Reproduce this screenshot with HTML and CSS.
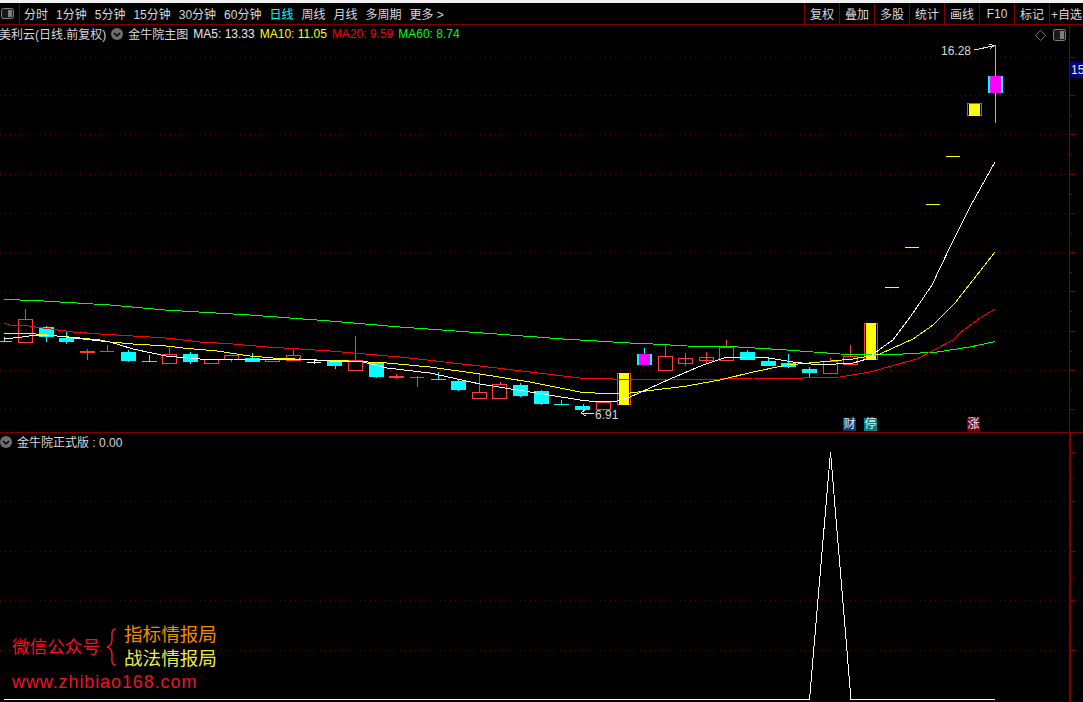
FILE: index.html
```html
<!DOCTYPE html>
<html lang="zh-CN">
<head>
<meta charset="utf-8">
<title>金牛院主图</title>
<link rel="stylesheet" href="styles.css">
</head>
<body>
<div class="app">
  <div class="topstrip"></div>
  <div class="toolbar">
    <div class="tool-toggle">
      <svg class="icon-panel" width="13" height="11" viewBox="0 0 13 11"><rect class="ip-frame" x="0.5" y="0.5" width="12" height="10" rx="2"/><rect class="ip-fill" x="7" y="2" width="4" height="7"/></svg>
    </div>
    <nav class="periods">
      <span>分时</span><span>1分钟</span><span>5分钟</span><span>15分钟</span><span>30分钟</span><span>60分钟</span><span class="active">日线</span><span>周线</span><span>月线</span><span>多周期</span><span>更多 &gt;</span>
    </nav>
    <nav class="tools">
      <span>复权</span><span>叠加</span><span>多股</span><span>统计</span><span>画线</span><span>F10</span><span>标记</span><span class="last">+自选</span>
    </nav>
  </div>

  <section class="pane pane-main">
    <svg class="chart" width="1083" height="407" viewBox="0 25 1083 407">
      <g class="grid">
        <path d="M0 57.5H1069M0 95.5H1069M0 134.5H1069M0 174.5H1069M0 213.5H1069M0 252.5H1069M0 291.5H1069M0 331.5H1069M0 370.5H1069M0 409.5H1069"/>
      </g>
      <g class="axis">
        <path class="axis-line" d="M1069.5 25V432"/>
        <path class="axis-tick" d="M1070 57.5h5M1070 95.5h5M1070 115.5h2M1070 134.5h5M1070 154.5h2M1070 174.5h5M1070 194.5h2M1070 213.5h5M1070 233.5h2M1070 252.5h5M1070 272.5h2M1070 291.5h5M1070 311.5h2M1070 331.5h5M1070 351.5h2M1070 370.5h5M1070 390.5h2M1070 409.5h5"/>
      </g>

      <!-- wicks -->
      <path class="wick-up" d="M25.5 309V319M87.5 349V360M107.5 345V352M169.5 348V354M211.5 363V364M231.5 359V362M272.5 361V362M293.5 350V355M355.5 336V360M396.5 374V379M417.5 376V387M479.5 373V392M500.5 382V384M603.5 409V411M665.5 345V356M685.5 353V366M706.5 352V364M726.5 340V347M830.5 358V361M850.5 345V356"/>
      <path class="wick-down" d="M4.5 337V341M46.5 326V342M66.5 332V344M128.5 350V362M149.5 355V361M190.5 352V364M252.5 353V362M335.5 360V369M376.5 362V378M438.5 372V380M458.5 380V391M520.5 383V397M541.5 390V405M561.5 400V405M583.5 404V410M644.5 348V354M747.5 350V352M768.5 358V361M788.5 354V368M809.5 367V378M995.5 45V123"/>
      <path class="wick-white" d="M314.5 359V364"/>

      <!-- hollow rising candles -->
      <g class="hollow">
        <rect x="18.5" y="319.5" width="14" height="23"/>
        <rect x="162.5" y="354.5" width="14" height="9"/>
        <rect x="204.5" y="359.5" width="14" height="4"/>
        <rect x="224.5" y="355.5" width="14" height="4"/>
        <rect x="265.5" y="359.5" width="14" height="2"/>
        <rect x="286.5" y="355.5" width="14" height="5"/>
        <rect x="348.5" y="360.5" width="14" height="10"/>
        <rect x="472.5" y="392.5" width="14" height="6"/>
        <rect x="492.5" y="384.5" width="14" height="14"/>
        <rect x="596.5" y="402.5" width="14" height="7"/>
        <rect x="658.5" y="356.5" width="14" height="14"/>
        <rect x="678.5" y="358.5" width="14" height="5"/>
        <rect x="699.5" y="357.5" width="14" height="3"/>
        <rect x="719.5" y="347.5" width="14" height="13"/>
        <rect x="823.5" y="361.5" width="14" height="12"/>
        <rect x="843.5" y="356.5" width="14" height="8"/>
      </g>

      <!-- falling candles -->
      <g class="falling">
        <rect x="39" y="327" width="15" height="10"/>
        <rect x="59" y="338" width="15" height="4"/>
        <rect x="121" y="352" width="15" height="9"/>
        <rect x="183" y="354" width="15" height="8"/>
        <rect x="245" y="358" width="15" height="4"/>
        <rect x="327" y="361" width="15" height="5"/>
        <rect x="369" y="363" width="15" height="14"/>
        <rect x="451" y="381" width="15" height="9"/>
        <rect x="513" y="385" width="15" height="11"/>
        <rect x="534" y="391" width="15" height="13"/>
        <rect x="575" y="406" width="15" height="4"/>
        <rect x="740" y="352" width="15" height="8"/>
        <rect x="761" y="361" width="15" height="5"/>
        <rect x="781" y="363" width="15" height="4"/>
        <rect x="802" y="369" width="15" height="4"/>
        <rect x="637" y="354" width="15" height="11"/>
        <rect x="988" y="76" width="15" height="17"/>
        <rect x="0" y="341" width="12" height="1"/>
        <rect x="142" y="361" width="15" height="1"/>
        <rect x="431" y="379" width="15" height="1"/>
        <rect x="554" y="404" width="15" height="1"/>
      </g>

      <!-- flat red bars -->
      <g class="solid-red">
        <rect x="80" y="351" width="15" height="2"/>
        <rect x="100" y="351" width="14" height="1"/>
        <rect x="389" y="376" width="15" height="2"/>
        <rect x="410" y="377" width="14" height="1"/>
      </g>
      <rect class="doji-white" x="307" y="362" width="14" height="1"/>

      <!-- signal overlays -->
      <g class="magenta">
        <rect x="639" y="354" width="11" height="11"/>
        <rect x="990" y="76" width="11" height="17"/>
      </g>
      <g class="signal">
        <rect x="617.5" y="373.5" width="13" height="31"/>
        <rect x="864.5" y="323.5" width="13" height="36"/>
        <rect x="967.5" y="103.5" width="14" height="12"/>
      </g>
      <g class="signal-fill">
        <rect x="619" y="373" width="10" height="32"/>
        <rect x="866" y="323" width="10" height="37"/>
        <rect x="969" y="104" width="11" height="12"/>
      </g>
      <g class="dash">
        <rect x="885" y="287" width="14" height="1"/>
        <rect x="905" y="247" width="14" height="1"/>
        <rect x="926" y="204" width="14" height="1"/>
        <rect x="946" y="156" width="14" height="1"/>
      </g>

      <!-- moving averages -->
      <polyline class="ma ma60" points="4,299.5 36,300.5 60,302 110,305 165,310 250,315 330,321 400,327 497,334 563,339 630,343 653,344 687,346 730,346.5 787,350 820,352.5 840,354 877,355 903,354 937,352 970,347 995,341.5"/>
      <polyline class="ma ma20" points="4,323 10,325 29,326 43,328 73,332 100,334 133,336 166,338 200,342 233,344 267,347 300,349 330,351 400,357 480,366 530,372 580,378 613,379 633,380 655,379 720,379 753,378 803,378 840,377 870,372 917,359 953,340 960,333 980,318 995,309"/>
      <polyline class="ma ma10" points="4,333.5 36,334 57,336 80,338 100,340 110,342 133,344 166,346 183,348 217,351 250,356 273,358 317,360 330,360 387,363 430,367 480,374 530,382 580,392 610,394 630,393 687,386 720,380 753,372 787,365 820,362 853,359 880,354 913,339 933,325 955,303 973,280 995,252"/>
      <polyline class="ma ma5" points="4,339 22,337 36,335 57,336 83,339 110,342 133,349 166,356 200,359 233,359 267,360 300,359 330,361 363,362 387,368 430,373 480,384 530,392 580,400 597,402 617,401 630,397 670,379 703,365 727,357 763,357 793,362 820,365 853,363 867,359 880,349 893,340 913,313 932,285 950,247 970,207 995,162"/>

      <!-- extreme price markers -->
      <path class="marker" d="M974 50L993 46M989 44L994 45.500L990 49"/>
      <path class="marker" d="M581 413H594M586 409L581 413L586 416"/>
      <text class="price" x="941" y="55">16.28</text>
      <text class="price" x="595" y="419">6.91</text>

      <rect class="price-tag" x="1070" y="62" width="13" height="16"/>
      <text class="price-tag-text" x="1071" y="74">15</text>
    </svg>

    <div class="legend">
      <span class="stock">美利云(日线.前复权)</span>
      <svg class="chev" width="12" height="12" viewBox="0 0 12 12"><circle class="chev-bg" cx="6" cy="6" r="6"/><path class="chev-mark" d="M3 5L6 8L9 5"/></svg>
      <span class="title">金牛院主图</span>
      <span class="c-white">MA5: 13.33</span>
      <span class="c-yellow">MA10: 11.05</span>
      <span class="c-red">MA20: 9.59</span>
      <span class="c-green">MA60: 8.74</span>
    </div>

    <div class="corner-icons">
      <svg width="11" height="11" viewBox="0 0 11 11"><path class="diamond" d="M5.500 0.500L10.500 5.500L5.500 10.500L0.500 5.500Z"/></svg>
      <svg class="icon-panel" width="13" height="12" viewBox="0 0 13 12"><rect class="ip-frame" x="0.5" y="0.5" width="12" height="11" rx="2"/><rect class="ip-fill" x="7" y="2" width="4" height="8"/></svg>
    </div>

    <span class="badge badge-cai">财</span>
    <span class="badge badge-ting">停</span>
    <span class="badge badge-zhang">涨</span>
  </section>

  <section class="pane pane-sub">
    <svg class="chart" width="1083" height="269" viewBox="0 433 1083 269">
      <g class="grid">
        <path d="M0 501.500H1069M0 551.500H1069M0 600.500H1069M0 650.500H1069"/>
      </g>
      <path class="axis-line-thick" d="M1070 433V702"/>
      <path class="axis-tick" d="M1071 452.500h5M1071 478.500h2M1071 501.500h5M1071 527.500h2M1071 551.500h5M1071 576.500h2M1071 600.500h5M1071 625.500h2M1071 650.500h5"/>
      <polyline class="ma ma5" points="4,699.500 809.500,699.500 830.500,452 851,699.500 995,699.500"/>
    </svg>

    <div class="legend legend-sub">
      <svg class="chev" width="12" height="12" viewBox="0 0 12 12"><circle class="chev-bg" cx="6" cy="6" r="6"/><path class="chev-mark" d="M3 5L6 8L9 5"/></svg>
      <span class="title">金牛院正式版 : 0.00</span>
    </div>

    <div class="watermark">
      <div class="wm-row">
        <span class="wm-name">微信公众号</span>
        <svg class="brace" width="12" height="38" viewBox="0 0 12 38"><path d="M10 1C5 1 6 6 6 11C6 15 5 18 1 19C5 20 6 23 6 27C6 32 5 37 10 37"/></svg>
        <div class="wm-stack">
          <span class="wm-orange">指标情报局</span>
          <span class="wm-yellow">战法情报局</span>
        </div>
      </div>
      <div class="wm-url">www.zhibiao168.com</div>
    </div>
  </section>
</div>
</body>
</html>
```

FILE: styles.css
```css
* { box-sizing: border-box; }
html, body { margin: 0; padding: 0; background: #000; overflow: hidden; }
body { font-family: "Liberation Sans", "Noto Sans CJK SC", sans-serif; font-size: 12px; color: #ddd; }
.app { width: 1083px; height: 702px; display: flex; flex-direction: column; background: #000; }

.topstrip { height: 3px; background: #f0f0f0; flex: none; }
.toolbar { height: 22px; flex: none; display: flex; align-items: stretch; justify-content: space-between; border-bottom: 1px solid #800000; color: #d8d8d8; }
.tool-toggle { width: 20px; border-right: 1px solid #800000; display: flex; align-items: center; padding-left: 1px; }
.periods { flex: 1; display: flex; align-items: center; gap: 8px; padding-left: 4px; white-space: nowrap; }
.periods .active { color: #00ffff; }
.tools { display: flex; align-items: stretch; white-space: nowrap; }
.tools span { width: 35px; border-left: 1px solid #800000; display: flex; align-items: center; justify-content: center; }
.tools .last { width: 34px; }

.ip-frame { fill: #1a1a1a; stroke: #808080; }
.ip-fill { fill: #808080; }

.pane { position: relative; flex: none; overflow: hidden; }
.pane-main { height: 408px; border-bottom: 1px solid #800000; }
.pane-sub { height: 269px; }
.chart { display: block; shape-rendering: crispEdges; }

.grid path { stroke: #6e0000; stroke-width: 1; stroke-dasharray: 1 4; fill: none; }
.axis-line { stroke: #800000; stroke-width: 1; }
.axis-line-thick { stroke: #800000; stroke-width: 2; }
.axis-tick { stroke: #800000; stroke-width: 1; fill: none; }

.wick-up { stroke: #ff3c3c; fill: none; }
.wick-down { stroke: #00ffff; fill: none; }
.wick-white { stroke: #fff; fill: none; }
.hollow rect { fill: #000; fill-opacity: 0; stroke: #ff3c3c; }
.falling rect { fill: #00ffff; }
.solid-red rect { fill: #ff3c3c; }
.doji-white { fill: #fff; }
.magenta rect { fill: #ff00ff; }
.signal rect { fill: #000; stroke: #ff3c3c; }
.signal-fill rect { fill: #ffff00; }
.dash rect { fill: #ffff00; }

.ma { fill: none; stroke-width: 1; }
.ma5 { stroke: #fff; }
.ma10 { stroke: #ffff00; }
.ma20 { stroke: #ff0000; }
.ma60 { stroke: #00ff00; }

.marker { fill: none; stroke: #e0e0e0; stroke-width: 1; }
.price { fill: #d8d8d8; font-size: 12px; }
.price-tag { fill: #000080; }
.price-tag-text { fill: #e8e8e8; font-size: 12px; }

.legend { position: absolute; left: -1px; top: 1px; height: 15px; display: flex; align-items: center; gap: 5px; white-space: nowrap; color: #d8d8d8; }
.legend-sub { left: 0; top: 1px; }
.chev-bg { fill: #6e6e6e; }
.chev-mark { fill: none; stroke: #000; stroke-width: 1.500; }
.c-white { color: #e8e8e8; }
.c-yellow { color: #ffff00; }
.c-red { color: #ff0000; }
.c-green { color: #00ff00; }

.corner-icons { position: absolute; right: 17px; top: 4px; display: flex; align-items: center; gap: 7px; }
.diamond { fill: none; stroke: #707070; }

.badge { position: absolute; top: 393px; width: 13px; height: 13px; font-size: 12px; line-height: 13px; text-align: center; color: #e8e8e8; }
.badge-cai { left: 843px; background: #0a3c6e; }
.badge-ting { left: 864px; background: #008080; }
.badge-zhang { left: 967px; background: #7a0000; }

.watermark { position: absolute; left: 12px; top: 190px; }
.wm-row { display: flex; align-items: center; }
.wm-name { color: #f0102a; font-size: 17.600px; line-height: 24px; }
.brace { margin: 0 6px 0 6px; flex: none; }
.brace path { fill: none; stroke: #f0102a; stroke-width: 1.500; shape-rendering: auto; }
.wm-stack { display: flex; flex-direction: column; font-size: 18.600px; line-height: 24px; }
.wm-orange { color: #f08a00; }
.wm-yellow { color: #eee84a; }
.wm-url { color: #f0102a; font-size: 18px; line-height: 22px; letter-spacing: 0.900px; }
```
